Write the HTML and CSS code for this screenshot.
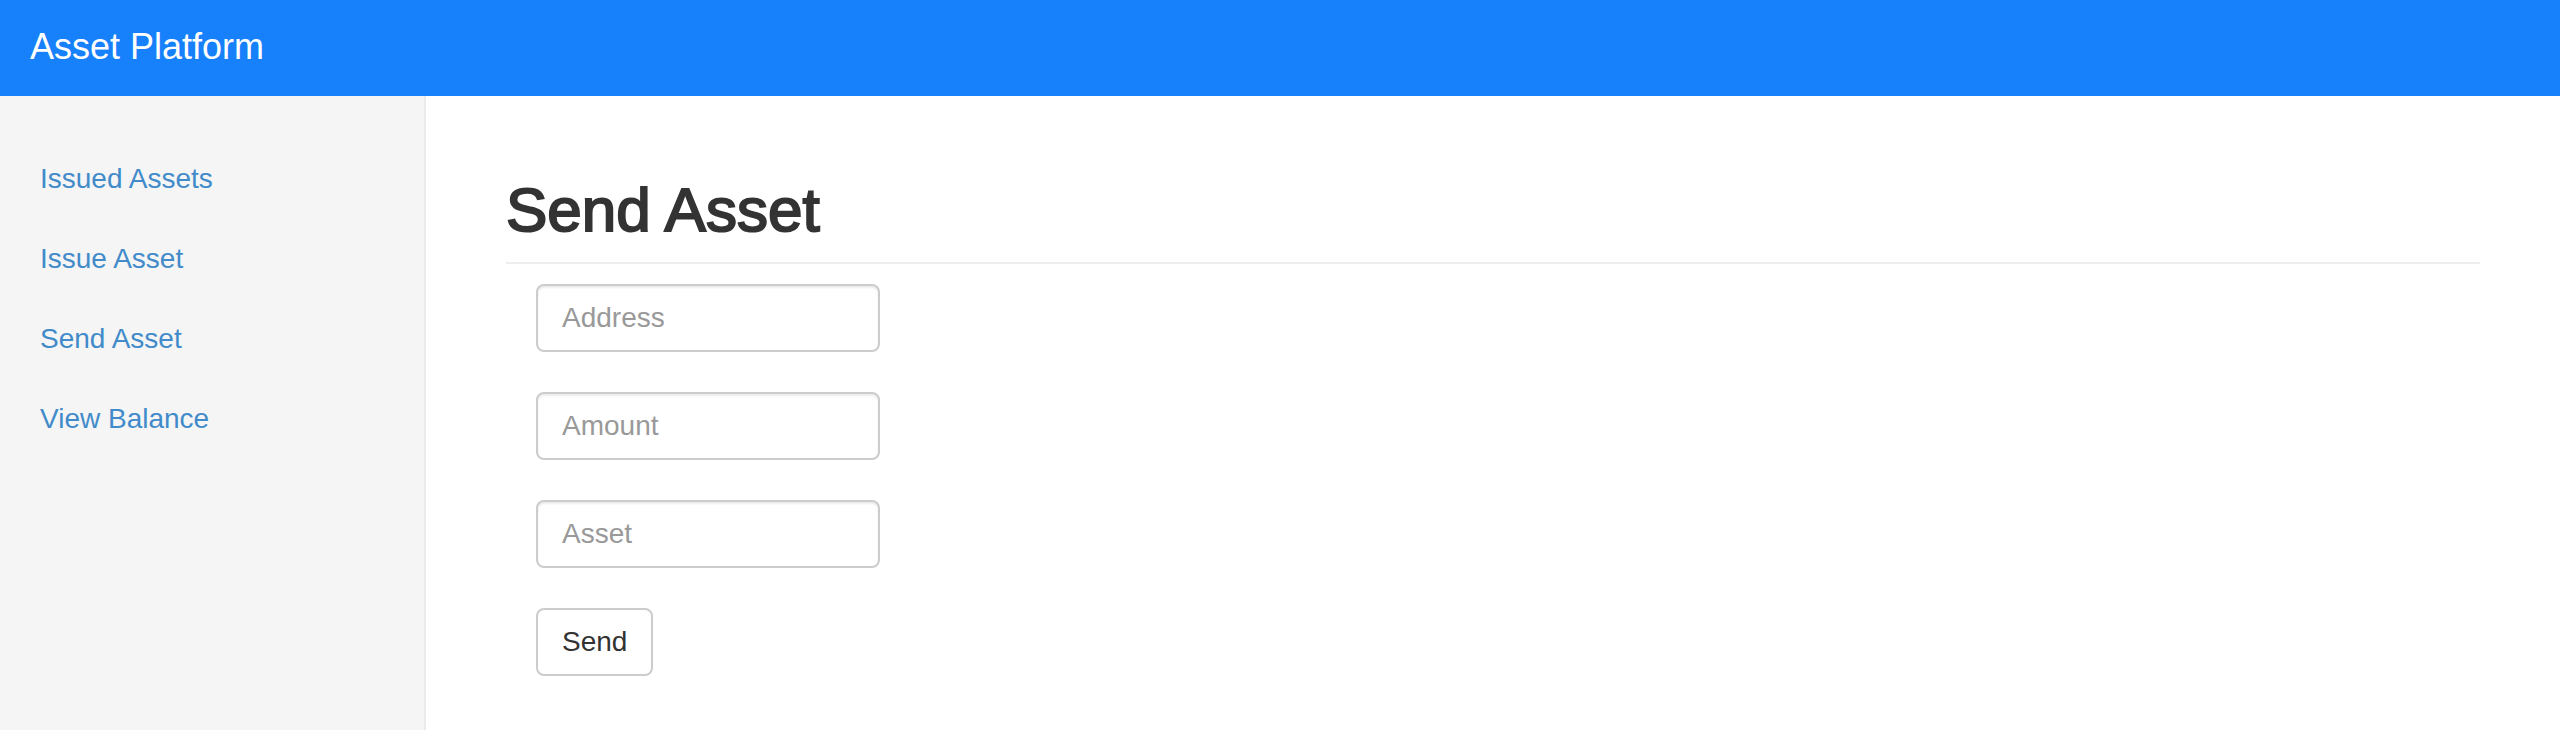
FILE: index.html
```html
<!DOCTYPE html>
<html lang="en">
<head>
<meta charset="utf-8">
<title>Asset Platform</title>
<link rel="stylesheet" href="styles.css">
</head>
<body>
<header class="topbar">
  <span class="brand">Asset Platform</span>
</header>
<div class="layout">
  <nav class="sidebar">
    <ul class="nav">
      <li><a href="#">Issued Assets</a></li>
      <li><a href="#">Issue Asset</a></li>
      <li><a href="#">Send Asset</a></li>
      <li><a href="#">View Balance</a></li>
    </ul>
  </nav>
  <main class="main">
    <h2 class="page-header">Send Asset</h2>
    <form class="send-form">
      <div class="form-group"><input class="form-control" type="text" placeholder="Address"></div>
      <div class="form-group"><input class="form-control" type="text" placeholder="Amount"></div>
      <div class="form-group"><input class="form-control" type="text" placeholder="Asset"></div>
      <div class="form-group"><button class="btn" type="button">Send</button></div>
    </form>
  </main>
</div>
</body>
</html>
```
FILE: styles.css
```css
* { box-sizing: border-box; }
html, body {
  margin: 0;
  padding: 0;
  height: 100%;
}
body {
  font-family: "Liberation Sans", Arial, Helvetica, sans-serif;
  font-size: 28px;
  line-height: 40px;
  color: #333;
  background: #fff;
  display: flex;
  flex-direction: column;
}
.topbar {
  height: 96px;
  flex: none;
  background: #1780fb;
  padding: 27px 30px 29px;
}
.brand {
  color: #fff;
  font-size: 36px;
  line-height: 40px;
  display: block;
}
.layout {
  flex: 1;
  display: flex;
  min-height: 0;
}
.sidebar {
  width: 426px;
  flex: none;
  background: #f5f5f5;
  border-right: 2px solid #ebebeb;
  padding: 43px 0 0;
}
.nav {
  list-style: none;
  margin: 0;
  padding: 0;
}
.nav a {
  display: block;
  padding: 20px 40px;
  color: #428bca;
  text-decoration: none;
  font-size: 28px;
  line-height: 40px;
}
.main {
  flex: 1;
  padding: 79px 80px 0;
}
.page-header {
  margin: 0;
  font-size: 62px;
  line-height: 69px;
  font-weight: 400;
  -webkit-text-stroke: 2px #333;
  letter-spacing: 0;
  color: #333;
  padding: 0 0 18px 0;
  border-bottom: 2px solid #eee;
}
.send-form {
  padding: 20px 0 0 30px;
  display: flex;
  flex-direction: column;
  gap: 40px;
}
.form-group {
  display: flex;
}
.form-control {
  width: 344px;
  height: 68px;
  padding: 12px 24px;
  font-family: "Liberation Sans", Arial, Helvetica, sans-serif;
  font-size: 28px;
  line-height: 40px;
  color: #555;
  background: #fff;
  border: 2px solid #ccc;
  border-radius: 8px;
  box-shadow: inset 0 2px 2px rgba(0, 0, 0, 0.075);
  outline: none;
}
.form-control::placeholder {
  color: #999;
}
.btn {
  height: 68px;
  padding: 12px 24px;
  font-family: "Liberation Sans", Arial, Helvetica, sans-serif;
  font-size: 28px;
  line-height: 40px;
  color: #333;
  background: #fff;
  border: 2px solid #ccc;
  border-radius: 8px;
}
```
